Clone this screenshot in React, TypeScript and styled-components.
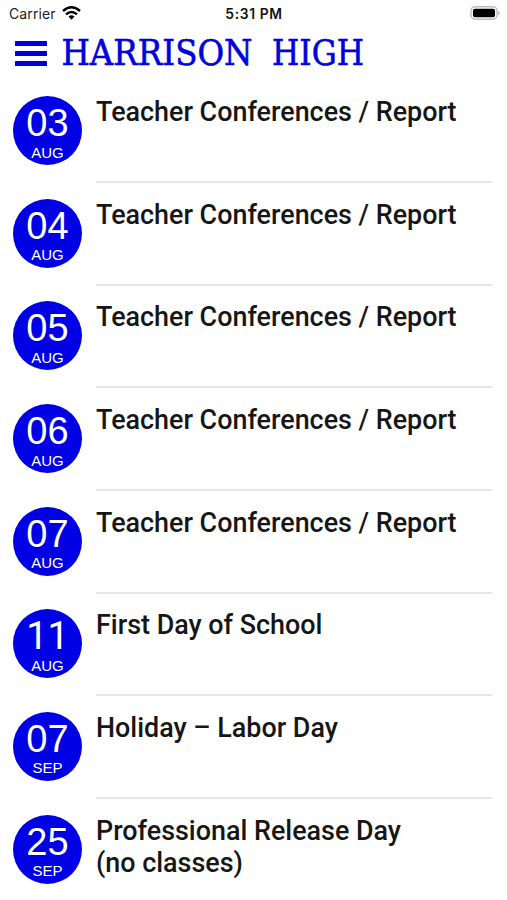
import React from 'react';
import styled, { createGlobalStyle } from 'styled-components';

const Global = createGlobalStyle`
  * { box-sizing: border-box; }
  body { margin: 0; background: #fff; overflow: hidden; }
`;
const Screen = styled.main`
  width: 507px; height: 900px; overflow: hidden; background: #fff;
`;
const StatusBar = styled.div`
  height: 28px; padding: 0 6px 0 9px; display: grid; grid-template-columns: 1fr auto 1fr;
  align-items: center; font: 14px/28px Inter, sans-serif; color: #222;
`;
const Carrier = styled.div`
  display: flex; align-items: center; gap: 6px; letter-spacing: 0.12px;
  svg { margin-top: -2px; }
`;
const Clock = styled.div`
  font-weight: 600; font-size: 13.8px; letter-spacing: 0.65px; color: #111; margin-right: 2px;
`;
const BatterySlot = styled.div`
  display: flex; justify-content: flex-end;
  svg { margin-top: -2px; }
`;
const Header = styled.header`
  height: 54px; padding: 0 14px; display: flex; align-items: flex-start; gap: 13px;
`;
const MenuButton = styled.button`
  border: 0; padding: 0; background: none; margin: 12.5px 0 0 1px; width: 32px; height: 25px;
  display: flex; flex-direction: column; justify-content: space-between;
`;
const Bar = styled.span`height: 5px; width: 32px; background: #0000dc; border-radius: 0.5px;`;
const Title = styled.svg`width: 330px; height: 54px; display: block; overflow: visible;`;
const List = styled.ul`margin: 0; padding: 0; list-style: none;`;
const DateBadge = styled.div`
  flex: none; width: 69px; height: 69px; border-radius: 50%; background: #0000e4; color: #fff;
  display: flex; flex-direction: column; align-items: center;
  font-family: "Liberation Sans", sans-serif; font-kerning: none;
`;
const Day = styled.span<{ $plainOnes: boolean }>`
  font-size: 38px; line-height: 38px; margin-top: 8px;
  font-family: ${p => (p.$plainOnes ? 'Roboto' : '"Liberation Sans"')}, sans-serif;
`;
const Month = styled.span`font-size: 15px; line-height: 17px; margin-top: 1.4px;`;
const Details = styled.div`
  flex: 1; height: 87px; border-bottom: 2px solid #e6e6e6;
`;
const Item = styled.li`
  height: 102.65px; padding: 14.2px 15px 0 13px; display: flex; gap: 14px;
  &:last-child ${Details} { border-bottom: 0; }
`;
const Name = styled.div`
  font: 500 26.9px/32px Roboto, sans-serif; color: #161616; white-space: pre-line;
`;

const events = [
  ['03', 'AUG', 'Teacher Conferences / Report'],
  ['04', 'AUG', 'Teacher Conferences / Report'],
  ['05', 'AUG', 'Teacher Conferences / Report'],
  ['06', 'AUG', 'Teacher Conferences / Report'],
  ['07', 'AUG', 'Teacher Conferences / Report'],
  ['11', 'AUG', 'First Day of School'],
  ['07', 'SEP', 'Holiday – Labor Day'],
  ['25', 'SEP', 'Professional Release Day\n(no classes)'],
];

export default function App() {
  return (
    <Screen>
      <Global />
      <StatusBar>
        <Carrier>Carrier
          <svg width="19" height="14" viewBox="0 0 19 14" fill="none" stroke="#000" strokeWidth="2.4">
            <path d="M1 5Q9.5-2.4 18 5M4 8.4Q9.5 3.4 15 8.4" />
            <path d="M6.5 10.5Q9.5 7.9 12.5 10.5L9.5 13.7Z" fill="#000" stroke="none" />
          </svg>
        </Carrier>
        <Clock>5:31 PM</Clock>
        <BatterySlot>
          <svg width="31" height="14" viewBox="0 0 31 14">
            <rect x="1" y=".75" width="26" height="12.5" rx="4" fill="none" stroke="#bbb" strokeWidth="1.4" />
            <rect x="3" y="2.8" width="22" height="8.5" rx="1.8" />
            <path d="M28.5 4.7Q31 7 28.5 9.3Z" fill="#aaa" />
          </svg>
        </BatterySlot>
      </StatusBar>
      <Header>
        <MenuButton aria-label="Menu"><Bar /><Bar /><Bar /></MenuButton>
        <Title viewBox="0 0 330 54" fontFamily="DejaVu Serif, serif" fontSize="35.5" fill="#0000dc" stroke="#0000dc" strokeWidth="0.6">
          <text x="1.5" y="37.2" textLength="191" lengthAdjust="spacingAndGlyphs">HARRISON</text>
          <text x="212" y="37.2" textLength="92" lengthAdjust="spacingAndGlyphs">HIGH</text>
        </Title>
      </Header>
      <List>
        {events.map(([day, month, name]) => (
          <Item key={day + month}>
            <DateBadge><Day $plainOnes={day === '11'}>{day}</Day><Month>{month}</Month></DateBadge>
            <Details><Name>{name}</Name></Details>
          </Item>
        ))}
      </List>
    </Screen>
  );
}
